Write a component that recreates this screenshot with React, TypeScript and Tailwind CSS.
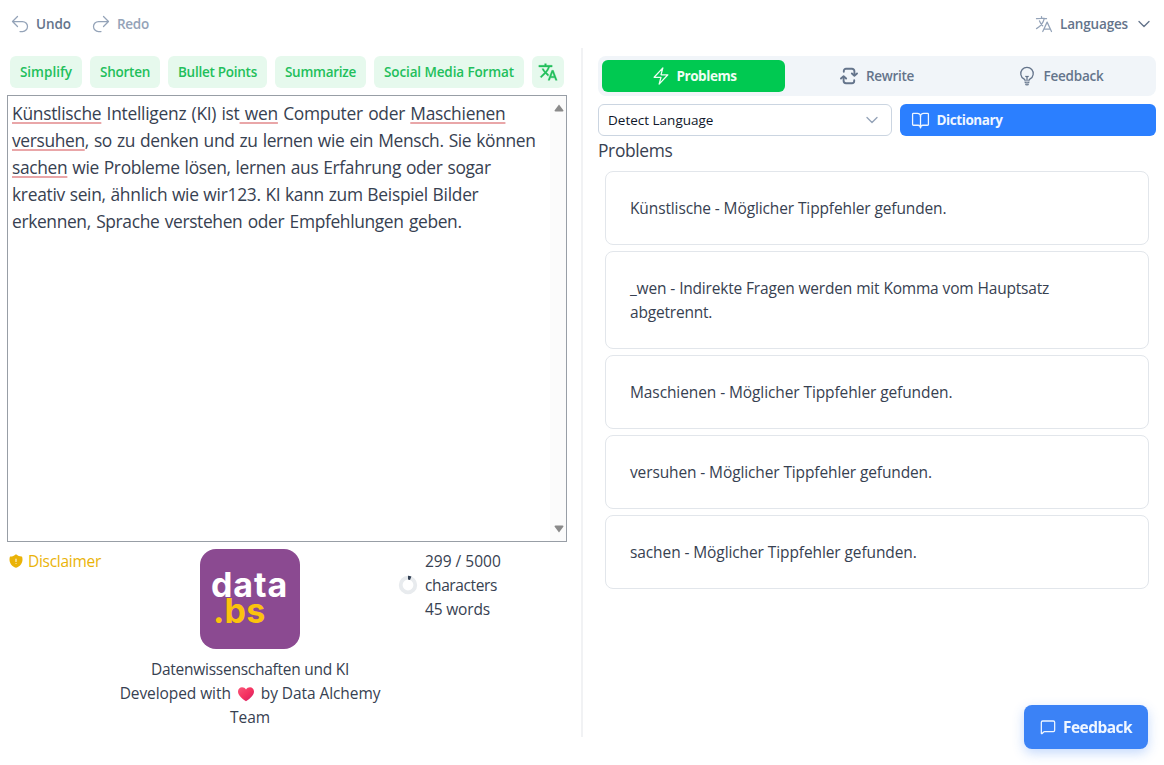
import type { ReactNode } from 'react';
import {
  HiOutlineArrowUturnLeft,
  HiOutlineArrowUturnRight,
  HiOutlineLanguage,
  HiOutlineBolt,
  HiOutlineLightBulb,
  HiOutlineChevronDown,
  HiShieldExclamation,
} from 'react-icons/hi2';
import { MdTranslate } from 'react-icons/md';
import { BookOpen, MessageSquare } from 'lucide-react';

const actions = [
  { label: 'Simplify', cls: 'w-[72px]' },
  { label: 'Shorten', cls: 'w-[70px] tracking-[-0.25px]' },
  { label: 'Bullet Points', cls: 'w-[99px] tracking-[-0.26px]' },
  { label: 'Summarize', cls: 'w-[91px] tracking-[-0.26px]' },
  { label: 'Social Media Format', cls: 'w-[150px] tracking-[-0.12px]' },
];

const problems = [
  { lines: ['Künstlische - Möglicher Tippfehler gefunden.'], cls: 'tracking-[-0.12px]' },
  {
    lines: ['_wen - Indirekte Fragen werden mit Komma vom Hauptsatz', 'abgetrennt.'],
    cls: 'tracking-[-0.2px] [word-spacing:0.25px]',
  },
  { lines: ['Maschienen - Möglicher Tippfehler gefunden.'], cls: 'tracking-[-0.1px]' },
  { lines: ['versuhen - Möglicher Tippfehler gefunden.'], cls: 'tracking-[-0.12px]' },
  { lines: ['sachen - Möglicher Tippfehler gefunden.'], cls: 'tracking-[-0.1px]' },
];

function Mistake({ children }: { children: ReactNode }) {
  return (
    <span className="underline decoration-[#e9a6a8] decoration-2 underline-offset-[2px] [text-decoration-skip-ink:none]">
      {children}
    </span>
  );
}

function RefreshIcon() {
  return (
    <svg viewBox="0 0 18 18" className="h-[18px] w-[18px]" fill="none" stroke="currentColor" strokeWidth="1.9" strokeLinecap="round" strokeLinejoin="round">
      <path d="M3.800 4.800V4a2.200 2.200 0 0 1 2.200-2.200h6a2.400 2.400 0 0 1 2.400 2.400v3.800" />
      <path d="M11.900 6.500l2.500 2.300 2.600-2.300" />
      <path d="M14.200 13.200v.8a2.200 2.200 0 0 1-2.200 2.200H6a2.400 2.400 0 0 1-2.400-2.400V10" />
      <path d="M1 11.500l2.600-2.300 2.500 2.300" />
    </svg>
  );
}

function Heart() {
  return (
    <svg viewBox="0 0 18 16" className="mr-[6px] ml-[2px] inline-block h-4 w-[18px] align-[-3px]">
      <defs>
        <linearGradient id="heart" x1="0" y1="0" x2="1" y2="1">
          <stop offset="0" stopColor="#f9577a" />
          <stop offset="0.55" stopColor="#f4305f" />
          <stop offset="1" stopColor="#c9216c" />
        </linearGradient>
      </defs>
      <path fill="url(#heart)" d="M9 15.200C5 12.600 1 9.400 1 5.500 1 2.900 2.900 1.200 5 1.200c1.700 0 3.100.8 4 2.200.9-1.400 2.300-2.200 4-2.200 2.100 0 4 1.700 4 4.300 0 3.900-4 7.100-8 9.700z" />
    </svg>
  );
}

export default function App() {
  return (
    <div className="flex h-[765px] w-[1164px] flex-col overflow-hidden bg-white font-['Open_Sans','Noto_Sans',sans-serif] text-[15.5px] leading-6 text-[#374151]">
      <header className="flex h-12 shrink-0 items-center pr-3 pl-[10px] text-[13.5px] font-semibold">
        <button className="flex items-center gap-[6px] tracking-[-0.07px] text-[#64748b]">
          <HiOutlineArrowUturnLeft className="h-5 w-5 text-[#94a3b8]" />
          Undo
        </button>
        <button className="ml-5 flex items-center gap-[6px] tracking-[-0.25px] text-[#94a3b8]">
          <HiOutlineArrowUturnRight className="h-5 w-5" />
          Redo
        </button>
        <button className="ml-auto flex items-center text-[#64748b]">
          <HiOutlineLanguage className="mr-[6px] h-5 w-5 text-[#94a3b8]" />
          <span className="w-[68px] tracking-[-0.16px]">Languages</span>
          <HiOutlineChevronDown className="ml-2 h-4 w-4 stroke-2" />
        </button>
      </header>

      <main className="flex">
        <section className="h-[689px] w-[583px] border-r-2 border-[#f1f2f4] pt-2 pl-[7px]">
          <div className="flex gap-2 pl-[3px] text-[13.5px] font-semibold text-[#22bf5b]">
            {actions.map((a) => (
              <button key={a.label} className={`h-8 rounded-md bg-[#e6f9ed] whitespace-nowrap ${a.cls}`}>
                {a.label}
              </button>
            ))}
            <button className="flex h-8 w-8 items-center justify-center rounded-md bg-[#e6f9ed]">
              <MdTranslate className="h-5 w-5 [&>path:last-child]:stroke-current [&>path:last-child]:stroke-[0.4]" />
            </button>
          </div>

          <div className="mt-[7px] flex h-[447px] w-[560px] border border-[#989ea6]">
            <div className="flex-1 pt-1 pl-1 text-[17.4px] leading-[27px] whitespace-nowrap">
              <p className="tracking-[-0.27px] [word-spacing:1px]">
                <Mistake>Künstlische</Mistake> Intelligenz (KI) ist<Mistake> wen</Mistake> Computer oder <Mistake>Maschienen</Mistake>
              </p>
              <p className="tracking-[-0.36px] [word-spacing:0.87px]">
                <Mistake>versuhen</Mistake>, so zu denken und zu lernen wie ein Mensch. Sie können
              </p>
              <p className="tracking-[-0.34px] [word-spacing:0.72px]">
                <Mistake>sachen</Mistake> wie Probleme lösen, lernen aus Erfahrung oder sogar
              </p>
              <p className="tracking-[-0.28px] [word-spacing:0.4px]">kreativ sein, ähnlich wie wir123. KI kann zum Beispiel Bilder</p>
              <p className="tracking-[-0.36px] [word-spacing:1.2px]">erkennen, Sprache verstehen oder Empfehlungen geben.</p>
            </div>
            <div className="flex w-4 flex-col items-center justify-between bg-[#fbfbfb] py-[8px] pl-px">
              <svg viewBox="0 0 10 8" className="h-2 w-[10px]" fill="#8a8a8a">
                <path d="M5 .5 9.500 6.500Q9.500 7.500 8.500 7.500H1.500Q.5 7.500.5 6.500z" />
              </svg>
              <svg viewBox="0 0 10 8" className="h-2 w-[10px]" fill="#8a8a8a">
                <path d="M5 7.500.5 1.500Q.5.5 1.500.5H8.500Q9.500.5 9.500 1.500z" />
              </svg>
            </div>
          </div>

          <footer className="flex pt-[7px]">
            <div className="flex h-6 w-[110px] items-center gap-1 pl-px tracking-[-0.28px] text-[#eab308]">
              <HiShieldExclamation className="h-4 w-4" />
              Disclaimer
            </div>
            <div className="flex w-[266px] flex-col items-center whitespace-nowrap">
              <div className="mb-2 flex h-[100px] w-[100px] flex-col rounded-2xl bg-[#8b4a91] pt-[23px] pl-[11px] font-['Inter',sans-serif] text-[34px] leading-[26px] font-bold text-white">
                <span className="tracking-[0.9px]">data</span>
                <span className="pl-[2px] tracking-[0.2px] text-[#fbc30d]">.bs</span>
              </div>
              <p className="tracking-[-0.26px]">Datenwissenschaften und KI</p>
              <p className="tracking-[-0.08px]">
                Developed with <Heart />by Data Alchemy
              </p>
              <p className="tracking-[-0.1px]">Team</p>
            </div>
            <div className="ml-[15px] flex items-start">
              <svg viewBox="0 0 20 20" className="mt-[26px] h-5 w-5" fill="none" strokeWidth="3.8">
                <circle cx="10" cy="10" r="7.3" stroke="#e8ebee" />
                <path d="M10 2.700A7.300 7.300 0 0 1 12.700 3.200" stroke="#334155" />
              </svg>
              <div className="ml-[7px]">
                <p>299 / 5000</p>
                <p className="tracking-[-0.39px]">characters</p>
                <p className="tracking-[-0.16px]">45 words</p>
              </div>
            </div>
          </footer>
        </section>

        <section className="w-[573px] pt-2 pl-[15px]">
          <nav className="flex h-10 items-center rounded-lg bg-[#f1f5f9] p-1 text-[13.5px] font-semibold text-[#64748b]">
            <button className="flex h-8 w-[183px] items-center justify-center gap-[6px] rounded-md bg-[#00c951] font-bold tracking-[-0.45px] text-[#f0fdf4]">
              <HiOutlineBolt className="h-5 w-5" />
              Problems
            </button>
            <button className="flex h-8 w-[184px] items-center justify-center gap-2 tracking-[-0.3px]">
              <RefreshIcon />
              Rewrite
            </button>
            <button className="flex h-8 w-[183px] items-center justify-center gap-[6px] tracking-[-0.22px]">
              <HiOutlineLightBulb className="h-5 w-5" />
              Feedback
            </button>
          </nav>

          <div className="mt-2 flex gap-2">
            <button className="flex h-8 w-[294px] items-center justify-between rounded-md border border-[#cbd5e1] pr-[11px] pl-[9px] text-[13.5px] text-[#0f172a]">
              Detect Language
              <HiOutlineChevronDown className="h-4 w-4 stroke-2 text-[#94a3b8]" />
            </button>
            <button className="flex h-8 w-64 items-center gap-[7px] rounded-md bg-[#2b7fff] pl-[10.5px] text-[13.5px] font-bold tracking-[-0.42px] text-[#eff6ff]">
              <BookOpen className="h-[19px] w-[19px]" strokeWidth={1.6} />
              Dictionary
            </button>
          </div>

          <h2 className="mt-px text-[17.4px] leading-[27px] tracking-[-0.34px]">Problems</h2>

          <div className="mt-[7px] flex flex-col gap-[6px] pr-[7px] pl-[7px]">
            {problems.map((p) => (
              <article key={p.lines[0]} className={`rounded-lg border border-[#e2e6eb] p-6 ${p.cls}`}>
                {p.lines.map((l) => (
                  <p key={l} className="whitespace-nowrap">
                    {l}
                  </p>
                ))}
              </article>
            ))}
          </div>
        </section>
      </main>

      <button className="fixed top-[705px] left-[1024px] flex h-11 w-[124px] items-center justify-center gap-[7px] rounded-lg bg-[#3b82f6] font-bold tracking-[-0.55px] text-[#eff6ff] shadow-[0_4px_12px_rgba(59,130,246,0.3)]">
        <MessageSquare className="h-4 w-4" strokeWidth={1.9} />
        Feedback
      </button>
    </div>
  );
}
